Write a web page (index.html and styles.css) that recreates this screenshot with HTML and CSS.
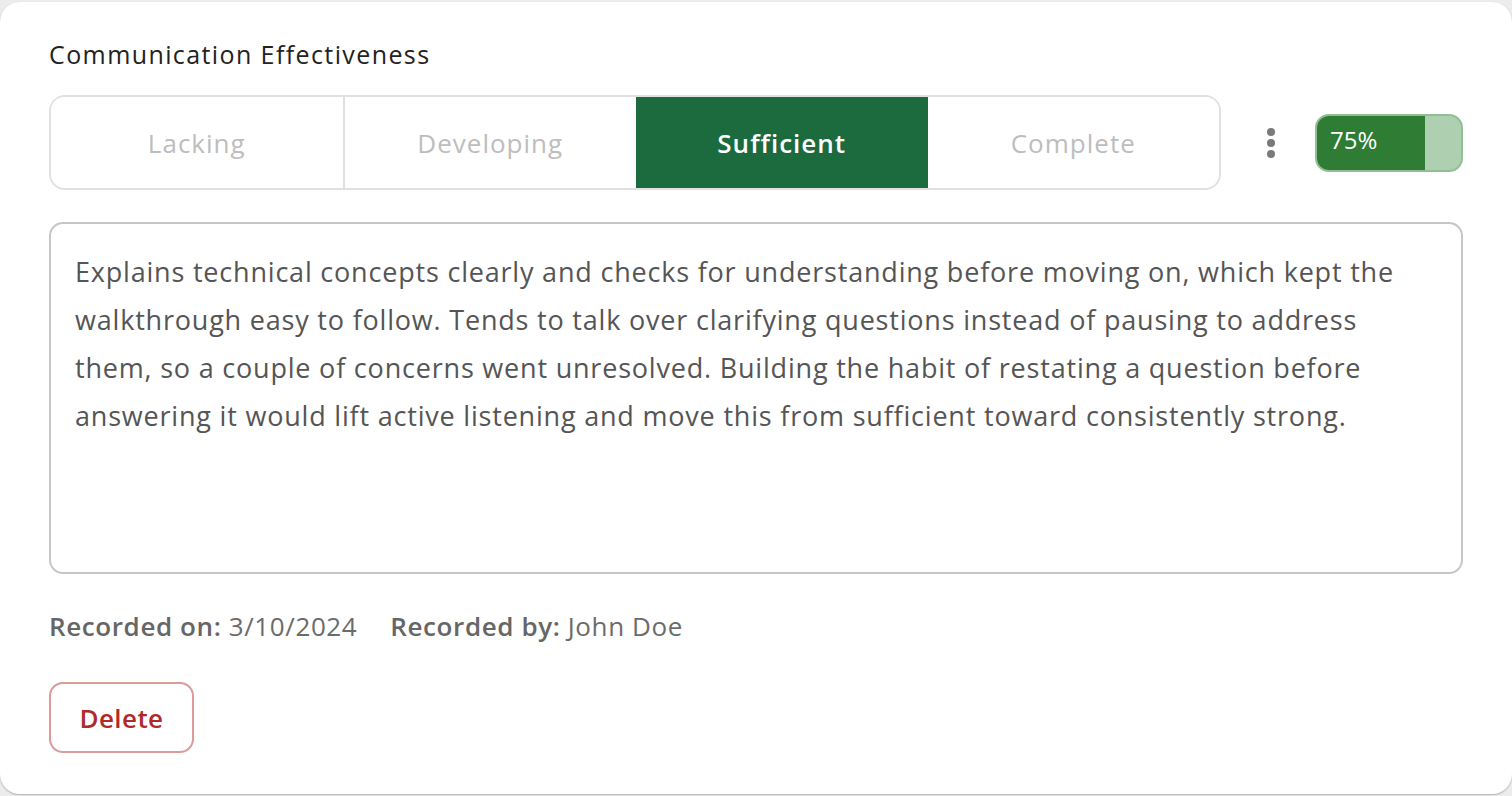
FILE: index.html
```html
<!DOCTYPE html>
<html>
<head>
<meta charset="utf-8">
<link rel="stylesheet" href="styles.css">
</head>
<body>
<div class="card">
  <h2 class="title">Communication Effectiveness</h2>
  <div class="rating-row">
    <div class="segments">
      <button class="seg">Lacking</button>
      <button class="seg">Developing</button>
      <button class="seg active">Sufficient</button>
      <button class="seg">Complete</button>
    </div>
    <div class="kebab"><span></span><span></span><span></span></div>
    <div class="pill">
      <div class="pill-fill" style="width:75%"><span>75%</span></div>
    </div>
  </div>
  <div class="notes">Explains technical concepts clearly and checks for understanding before moving on, which kept the<br>walkthrough easy to follow. Tends to talk over clarifying questions instead of pausing to address<br>them, so a couple of concerns went unresolved. Building the habit of restating a question before<br>answering it would lift active listening and move this from sufficient toward consistently strong.</div>
  <div class="meta">
    <span><b>Recorded on:</b> 3/10/2024</span>
    <span><b>Recorded by:</b> John Doe</span>
  </div>
  <div class="actions">
    <button class="delete">Delete</button>
  </div>
</div>
</body>
</html>
```

FILE: styles.css
```css
html, body {
  margin: 0;
  padding: 0;
  background: #ececec;
}
body {
  font-family: "Open Sans", "Noto Sans", sans-serif;
  height: 796px;
  overflow: hidden;
}
.card {
  margin-top: 2px;
  height: 792px;
  box-sizing: border-box;
  background: #fff;
  border-radius: 20px;
  box-shadow: 0 1px 2px rgba(0,0,0,0.25);
  padding: 36px 49px 0 49px;
  display: flex;
  flex-direction: column;
}
.title {
  margin: 0;
  font-size: 25px;
  font-weight: 400;
  line-height: 32px;
  color: #222;
  letter-spacing: 1.4px;
}
.rating-row {
  margin-top: 25px;
  display: flex;
  align-items: center;
}
.segments {
  width: 1172px;
  height: 95px;
  box-sizing: border-box;
  border: 2px solid #e0e0e0;
  border-radius: 16px;
  overflow: hidden;
  display: flex;
}
.seg {
  flex: 1;
  border: none;
  background: #fff;
  font-family: inherit;
  font-size: 26px;
  font-weight: 500;
  color: #bdbdbd;
  letter-spacing: 1px;
  padding: 0;
  border-left: 2px solid #e0e0e0;
}
.seg:first-child { border-left: none; }
.seg.active {
  background: #1c6b3f;
  color: #fff;
  font-weight: 600;
  border-left: none;
}
.seg.active + .seg { border-left: none; }
.kebab {
  margin-left: 44px;
  width: 12px;
  display: flex;
  flex-direction: column;
  align-items: center;
  gap: 3px;
}
.kebab span {
  width: 8px;
  height: 8px;
  border-radius: 50%;
  background: #7a7a7a;
}
.pill {
  margin-left: 38px;
  width: 148px;
  height: 58px;
  box-sizing: border-box;
  border: 2px solid #8fbf92;
  border-radius: 14px;
  background: #afd0b0;
  overflow: hidden;
  display: flex;
}
.pill-fill {
  height: 100%;
  background: #2f7d35;
  display: flex;
  align-items: center;
}
.pill-fill span {
  margin-left: 13px;
  color: #fff;
  font-size: 24px;
  font-weight: 400;
  margin-top: -6px;
}
.notes {
  margin-top: 32px;
  height: 352px;
  box-sizing: border-box;
  border: 2px solid #c6c6c6;
  border-radius: 14px;
  padding: 24px 24px;
  font-size: 27px;
  line-height: 48px;
  color: #555;
  white-space: nowrap;
  letter-spacing: 0.8px;
}
.meta {
  margin-top: 36px;
  display: flex;
  gap: 33px;
  font-size: 26px;
  line-height: 32px;
  color: #6b6b6b;
  letter-spacing: 0.6px;
}
.meta b { font-weight: 600; color: #666; }
.actions {
  margin-top: 40px;
}
.delete {
  width: 145px;
  height: 71px;
  border: 2px solid #dd9a9a;
  border-radius: 14px;
  background: #fff;
  color: #b02a2a;
  font-family: inherit;
  font-size: 26px;
  font-weight: 600;
  letter-spacing: 0.4px;
  padding: 0;
}
```
